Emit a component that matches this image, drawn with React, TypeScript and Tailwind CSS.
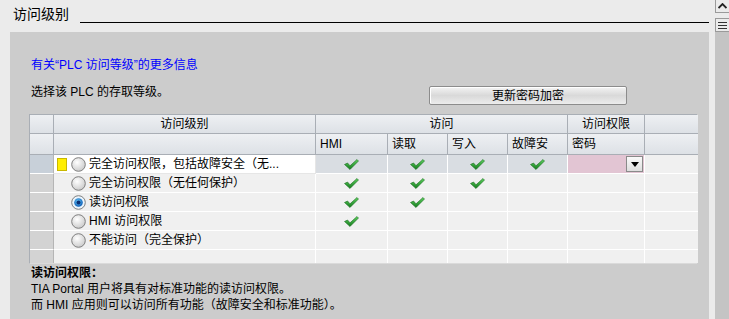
import React from "react";

const FONT = { fontFamily: '"Liberation Sans", "Noto Sans CJK SC", sans-serif' };

function Check() {
  return (
    <svg width="15" height="11" viewBox="0 0 15 11">
      <defs>
        <linearGradient id="cg" x1="0" y1="0" x2="0" y2="1">
          <stop offset="0" stopColor="#5fd35f" />
          <stop offset="1" stopColor="#137a1d" />
        </linearGradient>
      </defs>
      <path d="M0.5 5.5 L3.5 4 L6 6.8 L13 0.5 L14.5 2 L6 10.5 Z" fill="url(#cg)" stroke="#1d6b22" strokeWidth="0.6" />
    </svg>
  );
}

function Radio({ on }: { on?: boolean }) {
  return (
    <svg width="15" height="15" viewBox="0 0 15 15" className="shrink-0">
      <defs>
        <radialGradient id="ru" cx="0.4" cy="0.35" r="0.7">
          <stop offset="0" stopColor="#ffffff" />
          <stop offset="1" stopColor="#c9c9c9" />
        </radialGradient>
        <radialGradient id="rs" cx="0.45" cy="0.4" r="0.6">
          <stop offset="0" stopColor="#6fd3ff" />
          <stop offset="1" stopColor="#0b5bb5" />
        </radialGradient>
      </defs>
      <circle cx="7.5" cy="7.5" r="6.8" fill={on ? "#eaf4fc" : "url(#ru)"} stroke="#7f7f7f" strokeWidth="1" />
      {on && <circle cx="7.5" cy="7.5" r="4.3" fill="url(#rs)" />}
      {on && <circle cx="7.5" cy="7.5" r="2" fill="#0a2f73" />}
    </svg>
  );
}

const hdr = "border-r border-b border-[#a9aeb5] bg-gradient-to-b from-[#eef0f3] to-[#dde1e6] text-[12px] leading-[16px] text-black flex items-center";
const cell = "border-r border-b border-white bg-[#f0f0f0] flex items-center justify-center";
const rowHdr = "border-r border-b border-white border-r-[#b5b5b5] bg-[#d3d3d3]";

const rows: { label: string; on?: boolean; checks: boolean[] }[] = [
  { label: "完全访问权限（无任何保护）", checks: [true, true, true, false] },
  { label: "读访问权限", on: true, checks: [true, true, false, false] },
  { label: "HMI 访问权限", checks: [true, false, false, false] },
  { label: "不能访问（完全保护）", checks: [false, false, false, false] },
];

export default function App() {
  return (
    <div className="w-[729px] h-[319px] bg-[#ebebeb] flex overflow-hidden text-black" style={FONT}>
      <div className="w-[715px] flex flex-col">
        <div className="h-[32px] flex items-start shrink-0">
          <div className="ml-[13px] pt-[4px] text-[14px] leading-[20px]">访问级别</div>
          <div className="flex-1 ml-[11px] mr-[6px] mt-[22px] h-px bg-black" />
        </div>
        <div className="ml-[10px] w-[699px] flex-1 bg-[#cccccc] pl-[19px] flex flex-col">
          <div className="mt-[26px] ml-[2px] text-[12px] leading-[14px] text-[#0000ff]">有关“PLC 访问等级”的更多信息</div>
          <div className="mt-[13px] flex items-start">
            <div className="ml-[2px] w-[398px] text-[12px] leading-[14px]">选择该 PLC 的存取等级。</div>
            <button className="mt-[1px] w-[198px] h-[19px] border border-[#8c8c8c] rounded-[2px] bg-gradient-to-b from-[#f4f4f4] via-[#d9d9d9] to-[#ececec] text-[12px] leading-[16px] flex items-center justify-center shadow-[inset_1px_1px_0_#ffffff]">
              更新密码加密
            </button>
          </div>
          <div className="mt-[9px] w-[668px] border-t border-l border-[#a9aeb5] grid grid-cols-[24px_262px_72px_60px_60px_60px_77px_53px] border-b border-b-[#dadada]">
            {/* header row 1 */}
            <div className={`${hdr} h-[19px]`} />
            <div className={`${hdr} h-[19px] justify-center`}>访问级别</div>
            <div className={`${hdr} h-[19px] justify-center col-span-4`}>访问</div>
            <div className={`${hdr} h-[19px] justify-center`}>访问权限</div>
            <div className={`${hdr} h-[19px] border-r-0`} />
            {/* header row 2 */}
            <div className={`${hdr} h-[21px]`} />
            <div className={`${hdr} h-[21px]`} />
            <div className={`${hdr} h-[21px] pl-[4px]`}>HMI</div>
            <div className={`${hdr} h-[21px] pl-[4px]`}>读取</div>
            <div className={`${hdr} h-[21px] pl-[4px]`}>写入</div>
            <div className={`${hdr} h-[21px] pl-[4px]`}>故障安</div>
            <div className={`${hdr} h-[21px] pl-[4px]`}>密码</div>
            <div className={`${hdr} h-[21px] border-r-0`} />
            {/* selected row */}
            <div className="h-[19px] border-r border-b border-white border-r-[#b5b5b5] bg-[#c8d0d9]" />
            <div className="h-[19px] border-r border-b border-[#e6e6e6] bg-white flex items-center pl-[3px] text-[12px] leading-[14px] overflow-hidden whitespace-nowrap">
              <div className="w-[10px] h-[13px] bg-[#ffee00] border border-[#c9b800] shrink-0 mr-[4px]" />
              <Radio />
              <span className="ml-[3px]">完全访问权限，包括故障安全（无...</span>
            </div>
            {[0, 1, 2, 3].map((i) => (
              <div key={i} className="h-[19px] border-r border-b border-white bg-[#d9dde2] flex items-center justify-center">
                <Check />
              </div>
            ))}
            <div className="h-[19px] border-r border-b border-white bg-[#e2c5d3] flex items-center justify-end pr-[1px]">
              <div className="w-[17px] h-[16px] border border-[#8a8a8a] bg-gradient-to-b from-[#fafafa] to-[#dedede] flex items-center justify-center">
                <svg width="8" height="5" viewBox="0 0 8 5"><path d="M0 0 L8 0 L4 5 Z" fill="#000" /></svg>
              </div>
            </div>
            <div className="h-[19px] border-b border-white bg-[#f0f0f0]" />
            {rows.map((r, ri) => (
              <React.Fragment key={ri}>
                <div className={`${rowHdr} h-[19px]`} />
                <div className="h-[19px] border-r border-b border-white bg-[#f0f0f0] flex items-center pl-[17px] text-[12px] leading-[14px] whitespace-nowrap">
                  <Radio on={r.on} />
                  <span className="ml-[3px]">{r.label}</span>
                </div>
                {r.checks.map((c, ci) => (
                  <div key={ci} className={`${cell} h-[19px]`}>{c && <Check />}</div>
                ))}
                <div className={`${cell} h-[19px]`} />
                <div className="h-[19px] border-b border-white bg-[#f0f0f0]" />
              </React.Fragment>
            ))}
            {/* partial last row */}
            <div className="h-[13px] border-r border-[#b5b5b5] bg-[#d3d3d3]" />
            {[0, 1, 2, 3, 4, 5].map((i) => (
              <div key={i} className="h-[13px] border-r border-white bg-[#f0f0f0]" />
            ))}
            <div className="h-[13px] bg-[#f0f0f0]" />
          </div>
          <div className="mt-[1px] ml-[2px] text-[12px] leading-[16px]">
            <div className="font-bold">读访问权限：</div>
            <div>TIA Portal 用户将具有对标准功能的读访问权限。</div>
            <div>而 HMI 应用则可以访问所有功能（故障安全和标准功能）。</div>
          </div>
        </div>
      </div>
      <div className="w-[14px] flex flex-col bg-[#c4c4c4]">
        <div className="h-[13px] bg-[#ebebeb] border-l border-b border-[#9a9a9a] flex items-center justify-center">
          <svg width="9" height="6" viewBox="0 0 9 6"><path d="M0.5 5 L4.5 1 L8.5 5" fill="none" stroke="#222" strokeWidth="1.8" /></svg>
        </div>
        <div className="h-[5px] bg-[#ebebeb]" />
        <div className="h-[14px] bg-[#ebebeb] border-l border-t border-b border-[#9a9a9a] flex flex-col items-center justify-center gap-[2px]">
          <div className="w-[9px] h-px bg-[#333]" />
          <div className="w-[9px] h-px bg-[#333]" />
          <div className="w-[9px] h-px bg-[#333]" />
        </div>
      </div>
    </div>
  );
}
